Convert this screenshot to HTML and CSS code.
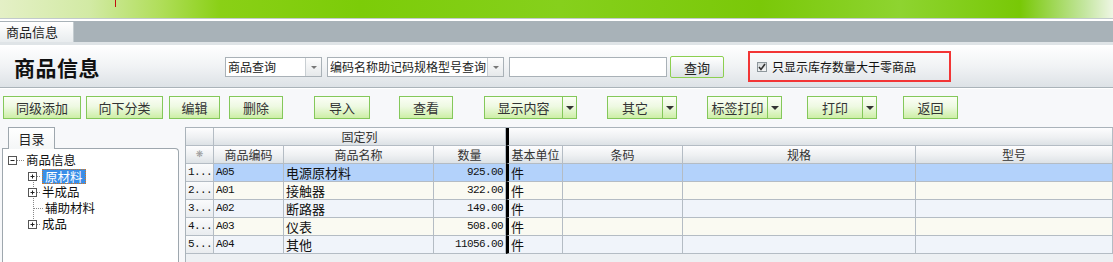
FILE: index.html
```html
<!DOCTYPE html>
<html lang="zh-CN">
<head>
<meta charset="UTF-8">
<title>商品信息</title>
<link rel="stylesheet" href="styles.css">
</head>
<body>

<div class="banner"><span class="mark"></span></div>
<div class="tabbar"><div class="tab">商品信息</div></div>

<div class="header">
    <h1>商品信息</h1>
    <div class="combo combo-type"><span>商品查询</span><i class="drop"></i></div>
    <div class="combo combo-field"><span>编码名称助记码规格型号查询</span><i class="drop"></i></div>
    <input type="text" class="search">
    <button class="query">查询</button>
    <div class="only">
        <span class="chk"><svg width="8" height="8" viewBox="0 0 8 8"><path d="M1 4 L3 6.5 L7 1" fill="none" stroke="#333" stroke-width="1.6"/></svg></span>
        <span>只显示库存数量大于零商品</span>
    </div>
</div>

<div class="toolbar">
    <button class="btn tb-add">同级添加</button>
    <button class="btn tb-sub">向下分类</button>
    <button class="btn tb-edit">编辑</button>
    <button class="btn tb-del">删除</button>
    <button class="btn tb-imp">导入</button>
    <button class="btn tb-view">查看</button>
    <div class="split tb-show"><span class="label">显示内容</span><span class="arrow"><i></i></span></div>
    <div class="split tb-other"><span class="label">其它</span><span class="arrow"><i></i></span></div>
    <div class="split tb-tag"><span class="label">标签打印</span><span class="arrow"><i></i></span></div>
    <div class="split tb-print"><span class="label">打印</span><span class="arrow"><i></i></span></div>
    <button class="btn tb-back">返回</button>
</div>

<div class="workspace">
    <div class="side">
        <div class="side-tab">目录</div>
        <div class="tree">
            <div class="node">
                <svg class="lead" width="23" height="16"><rect x="5.5" y="4.5" width="8" height="8" fill="#fff" stroke="#555"/><path d="M7.5 8.5 H11.5" stroke="#222"/><path d="M14 8.5 H22" stroke="#888" stroke-dasharray="1 1"/></svg>
                <span>商品信息</span>
            </div>
            <div class="node">
                <svg class="lead" width="39" height="16"><path d="M30.5 12 V16" stroke="#888" stroke-dasharray="1 1"/><rect x="25.5" y="4.5" width="8" height="8" fill="#fff" stroke="#555"/><path d="M27.5 8.5 H31.5 M29.5 6.5 V10.5" stroke="#222"/><path d="M34 8.5 H38" stroke="#888" stroke-dasharray="1 1"/></svg>
                <span class="picked">原材料</span>
            </div>
            <div class="node">
                <svg class="lead" width="39" height="16"><path d="M30.5 0 V16" stroke="#888" stroke-dasharray="1 1"/><rect x="25.5" y="4.5" width="8" height="8" fill="#fff" stroke="#555"/><path d="M27.5 8.5 H31.5 M29.5 6.5 V10.5" stroke="#222"/><path d="M34 8.5 H38" stroke="#888" stroke-dasharray="1 1"/></svg>
                <span>半成品</span>
            </div>
            <div class="node">
                <svg class="lead" width="42" height="16"><path d="M30.5 0 V16" stroke="#888" stroke-dasharray="1 1"/><path d="M31 8.5 H41" stroke="#888" stroke-dasharray="1 1"/></svg>
                <span>辅助材料</span>
            </div>
            <div class="node">
                <svg class="lead" width="39" height="16"><path d="M30.5 0 V5" stroke="#888" stroke-dasharray="1 1"/><rect x="25.5" y="4.5" width="8" height="8" fill="#fff" stroke="#555"/><path d="M27.5 8.5 H31.5 M29.5 6.5 V10.5" stroke="#222"/><path d="M34 8.5 H38" stroke="#888" stroke-dasharray="1 1"/></svg>
                <span>成品</span>
            </div>
        </div>
    </div>

    <div class="grid">
        <div class="hd"></div>
        <div class="hd span3">固定列</div>
        <div class="hd span4 fix-edge"></div>

        <div class="hd star">❋</div>
        <div class="hd">商品编码</div>
        <div class="hd">商品名称</div>
        <div class="hd">数量</div>
        <div class="hd fix-edge">基本单位</div>
        <div class="hd">条码</div>
        <div class="hd">规格</div>
        <div class="hd">型号</div>

        <div class="rh">1...</div><div class="c sel mono">A05</div><div class="c sel">电源原材料</div><div class="c sel mono num">925.00</div><div class="c sel fix-edge">件</div><div class="c sel"></div><div class="c sel"></div><div class="c sel"></div>
        <div class="rh">2...</div><div class="c even mono">A01</div><div class="c even">接触器</div><div class="c even mono num">322.00</div><div class="c even fix-edge">件</div><div class="c even"></div><div class="c even"></div><div class="c even"></div>
        <div class="rh">3...</div><div class="c odd mono">A02</div><div class="c odd">断路器</div><div class="c odd mono num">149.00</div><div class="c odd fix-edge">件</div><div class="c odd"></div><div class="c odd"></div><div class="c odd"></div>
        <div class="rh">4...</div><div class="c even mono">A03</div><div class="c even">仪表</div><div class="c even mono num">508.00</div><div class="c even fix-edge">件</div><div class="c even"></div><div class="c even"></div><div class="c even"></div>
        <div class="rh">5...</div><div class="c odd mono">A04</div><div class="c odd">其他</div><div class="c odd mono num">11056.00</div><div class="c odd fix-edge">件</div><div class="c odd"></div><div class="c odd"></div><div class="c odd"></div>
    </div>
</div>

</body>
</html>
```

FILE: styles.css
```css
body {
    margin: 0;
    width: 1113px;
    height: 262px;
    overflow: hidden;
    background-color: #f7f8fa;
    color: #222;
    font-family: "Noto Sans CJK SC", "Liberation Sans", sans-serif;
    font-size: 12px;
}
button {
    font-family: inherit;
    padding: 0;
    cursor: pointer;
}

/* top banner */
.banner {
    height: 18px;
    border-bottom: 1px solid #c2cacd;
    background: linear-gradient(90deg, #e4f0c6 0, #d2eaa4 90px, #b0de5a 160px, #8ad016 220px, #7ccc08 360px, #86d01c 560px, #7ac808 760px, #8ed430 900px, #78c806 1020px, #c4e6a0 1085px, #eef6e4 1113px);
    display: flex;
}
.mark {
    width: 1px;
    height: 7px;
    margin-left: 115px;
    background-color: #c01010;
}
.tabbar {
    border-top: 2px solid #fff;
    height: 21px;
    background-color: #a8b2b8;
}
.tab {
    width: 67px;
    height: 20px;
    margin-top: 1px;
    padding-left: 6px;
    line-height: 20px;
    font-size: 13px;
    color: #222;
    background: linear-gradient(#ffffff, #e8ecee);
    border-right: 1px solid #c4ccd0;
}

/* title line */
.header {
    border-top: 3px solid #dfe4e7;
    border-bottom: 1px solid #aab3b9;
    height: 40px;
    padding-top: 2px;
    box-sizing: content-box;
    background: linear-gradient(#ffffff, #f1f3f5 50%, #dde2e6);
    display: flex;
    align-items: center;
}
.header h1 {
    margin: 0 0 0 14px;
    width: 211px;
    font-size: 21px;
    font-weight: bold;
    color: #111;
    letter-spacing: 0.5px;
}
.combo {
    height: 20px;
    box-sizing: border-box;
    border: 1px solid #a9b1b7;
    background-color: #fff;
    display: flex;
}
.combo span {
    flex: 1;
    padding-left: 2px;
    line-height: 18px;
    font-size: 12px;
    white-space: nowrap;
    overflow: hidden;
}
.combo .drop {
    width: 15px;
    border-left: 1px solid #c8ced2;
    background: linear-gradient(#fdfdfd, #e6e9eb);
    display: flex;
    align-items: center;
    justify-content: center;
}
.combo .drop::after {
    content: "";
    border-left: 3px solid transparent;
    border-right: 3px solid transparent;
    border-top: 3px solid #777;
}
.combo-type {
    width: 97px;
}
.combo-field {
    width: 177px;
    margin-left: 5px;
}
.search {
    width: 158px;
    height: 20px;
    box-sizing: border-box;
    margin: 0 0 0 5px;
    border: 1px solid #a9b1b7;
}
.query {
    width: 54px;
    height: 22px;
    margin-left: 3px;
    border: 1px solid #8ccf50;
    border-radius: 2px;
    background: linear-gradient(#ffffff, #eef1f3 50%, #dce1e4);
    font-size: 13px;
    color: #222;
}
.only {
    width: 203px;
    height: 31px;
    box-sizing: border-box;
    margin: -1px 0 0 24px;
    border: 2px solid #f23535;
    padding-left: 7px;
    display: flex;
    align-items: center;
    font-size: 12px;
    color: #111;
}
.chk {
    width: 10px;
    height: 10px;
    box-sizing: border-box;
    border: 1px solid #8e979c;
    background: linear-gradient(#d6dadc, #f4f5f6);
    margin-right: 5px;
    display: flex;
    align-items: center;
    justify-content: center;
}

/* toolbar */
.toolbar {
    border-top: 1px solid #fff;
    height: 29px;
    padding-top: 7px;
    display: flex;
}
.btn, .split {
    height: 23px;
    box-sizing: border-box;
    border: 1px solid #84c85a;
    background: linear-gradient(#fbfef6, #eef9e2 45%, #cdefa6);
    font-size: 13px;
    color: #333;
    line-height: 21px;
}
.split {
    display: flex;
}
.split .label {
    flex: 1;
    text-align: center;
}
.split .arrow {
    width: 13px;
    border-left: 1px solid #84c85a;
    display: flex;
    align-items: center;
    justify-content: center;
}
.split .arrow i {
    border-left: 4px solid transparent;
    border-right: 4px solid transparent;
    border-top: 4px solid #333;
}
.tb-add   { width: 78px; margin-left: 3px; }
.tb-sub   { width: 77px; margin-left: 5px; }
.tb-edit  { width: 51px; margin-left: 6px; }
.tb-del   { width: 54px; margin-left: 9px; }
.tb-imp   { width: 56px; margin-left: 31px; }
.tb-view  { width: 54px; margin-left: 29px; }
.tb-show  { width: 93px; margin-left: 31px; }
.tb-other { width: 70px; margin-left: 30px; }
.tb-tag   { width: 75px; margin-left: 30px; }
.tb-print { width: 70px; margin-left: 25px; }
.tb-back  { width: 55px; margin-left: 26px; }

/* lower part */
.workspace {
    display: flex;
    height: 138px;
}
.side {
    width: 185px;
    padding-top: 2px;
}
.side-tab {
    position: relative;
    width: 47px;
    height: 22px;
    box-sizing: border-box;
    margin: 0 0 -1px 8px;
    border: 1px solid #9ea7ae;
    border-bottom: none;
    background: linear-gradient(#ffffff, #f4f6f7);
    text-align: center;
    line-height: 21px;
    font-size: 13px;
}
.tree {
    width: 177px;
    height: 120px;
    box-sizing: border-box;
    margin-left: 2px;
    border: 1px solid #9ea7ae;
    border-bottom: none;
    border-radius: 0 4px 0 0;
    background-color: #fff;
    padding-top: 3px;
}
.node {
    height: 16px;
    line-height: 16px;
    display: flex;
    align-items: center;
    font-size: 12.5px;
    color: #111;
}
.lead {
    flex: none;
}
.picked {
    height: 15px;
    line-height: 13px;
    box-sizing: border-box;
    padding: 0 2px;
    border: 1px dotted #d9781c;
    background-color: #3a8ee8;
    color: #fff;
}

/* data grid */
.grid {
    flex: 1;
    margin-top: 2px;
    border-top: 1px solid #aab3ba;
    border-left: 1px solid #aab3ba;
    background-color: #edf0f3;
    display: grid;
    grid-template-columns: 28px 70px 150px 72px 57px 120px 233px 197px;
    grid-auto-rows: 18px;
    align-content: start;
}
.grid > div {
    box-sizing: border-box;
    border-right: 1px solid #b4bcc4;
    border-bottom: 1px solid #b4bcc4;
    padding: 0 2px;
    line-height: 17px;
    white-space: nowrap;
}
.hd {
    background: linear-gradient(#fdfdfe, #eef0f2 55%, #dde2e6);
    text-align: center;
    color: #333;
    font-size: 12px;
}
.span3 {
    grid-column: span 3;
}
.span4 {
    grid-column: span 4;
}
.star {
    color: #999;
    font-size: 9px;
    font-family: "DejaVu Sans", sans-serif;
}
.grid > .fix-edge {
    border-left: 3px solid #000;
}
.rh {
    background: linear-gradient(#fafbfc, #e9ecef);
    font-family: "Liberation Mono", monospace;
    font-size: 11px;
    letter-spacing: -0.6px;
    color: #111;
}
.c {
    font-size: 13px;
    color: #111;
}
.mono {
    font-family: "Liberation Mono", monospace;
    font-size: 11px;
    letter-spacing: -0.6px;
}
.num {
    text-align: right;
}
.sel {
    background-color: #b3d2fb;
}
.odd {
    background-color: #f0f4fa;
}
.even {
    background-color: #fafaf2;
}
```
